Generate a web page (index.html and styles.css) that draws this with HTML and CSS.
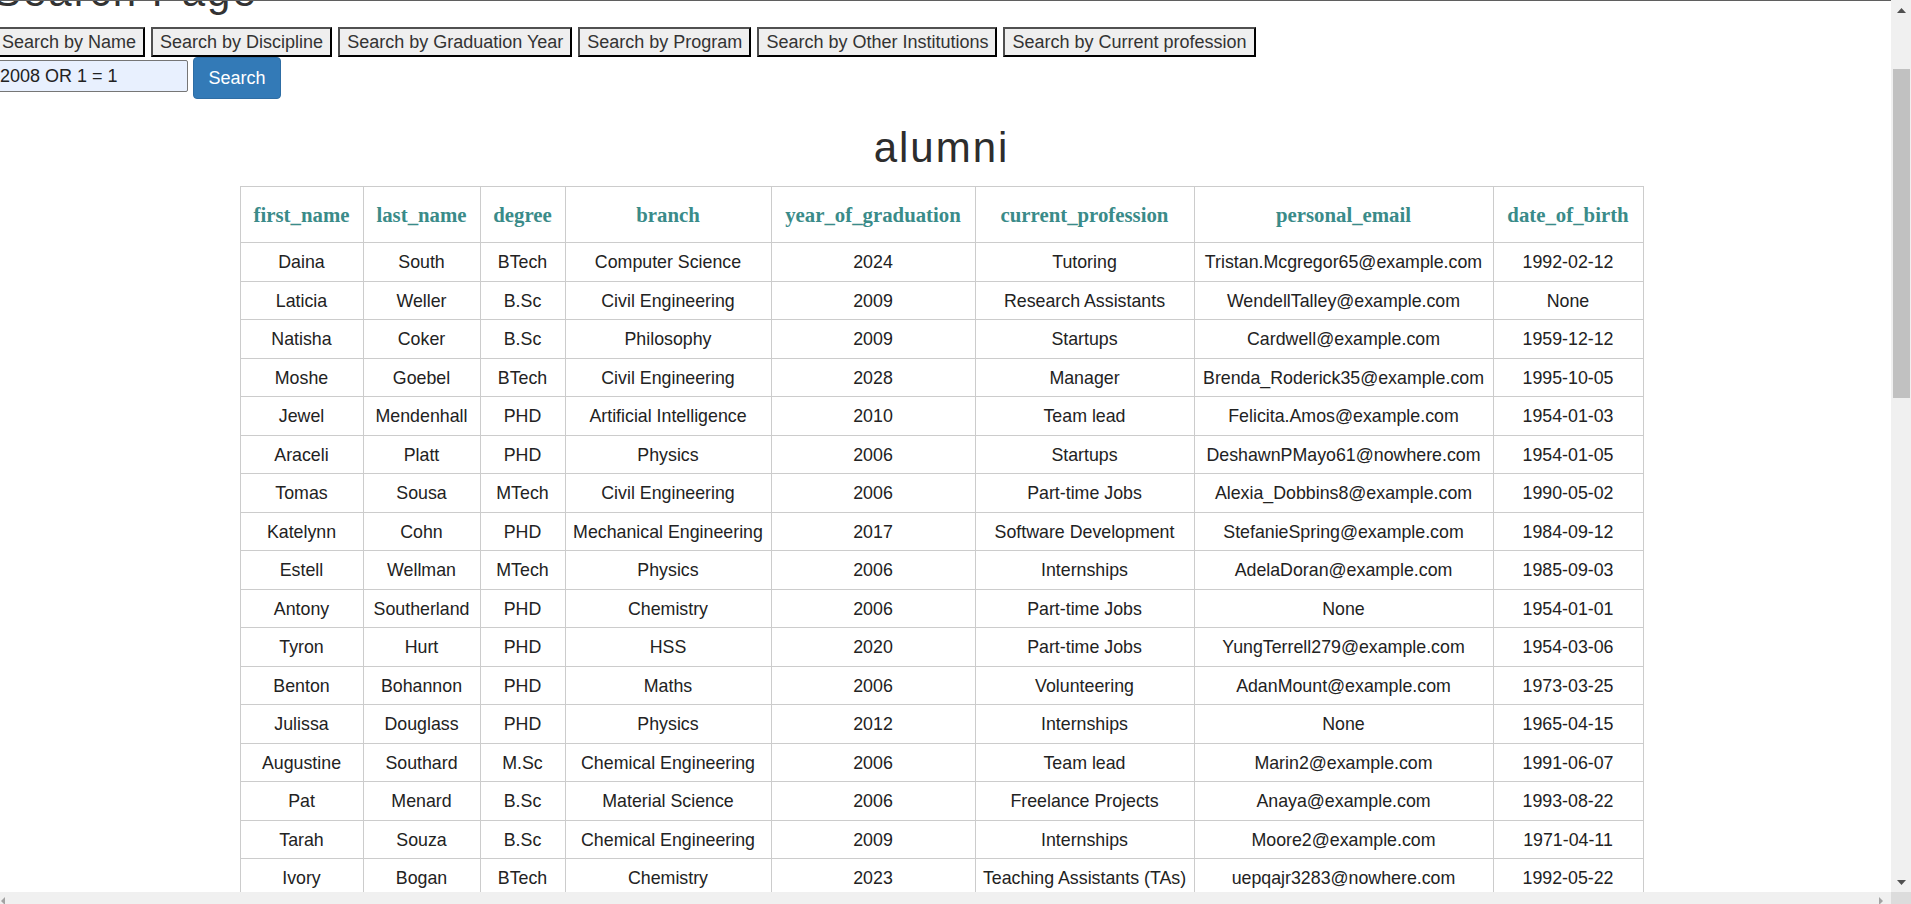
FILE: index.html
```html
<!DOCTYPE html>
<html lang="en">
<head>
<meta charset="utf-8">
<title>Search Page</title>
<link rel="stylesheet" href="styles.css">
</head>
<body>
<div class="window">
  <div class="viewport">
    <div class="page">
      <h1 class="page-title">Search Page</h1>
      <div class="filters">
        <button class="filter-btn" type="button">Search by Name</button>
        <button class="filter-btn" type="button">Search by Discipline</button>
        <button class="filter-btn" type="button">Search by Graduation Year</button>
        <button class="filter-btn" type="button">Search by Program</button>
        <button class="filter-btn" type="button">Search by Other Institutions</button>
        <button class="filter-btn" type="button">Search by Current profession</button>
      </div>
      <form class="search-form">
        <input class="search-input" type="text" value="2008 OR 1 = 1">
        <button class="search-btn" type="button">Search</button>
      </form>
      <h2 class="table-title">alumni</h2>
      <table class="alumni-table">
        <colgroup>
          <col class="c1"><col class="c2"><col class="c3"><col class="c4"><col class="c5"><col class="c6"><col class="c7"><col class="c8">
        </colgroup>
        <thead>
          <tr><th>first_name</th><th>last_name</th><th>degree</th><th>branch</th><th>year_of_graduation</th><th>current_profession</th><th>personal_email</th><th>date_of_birth</th></tr>
        </thead>
        <tbody>
          <tr><td>Daina</td><td>South</td><td>BTech</td><td>Computer Science</td><td>2024</td><td>Tutoring</td><td>Tristan.Mcgregor65@example.com</td><td>1992-02-12</td></tr>
          <tr><td>Laticia</td><td>Weller</td><td>B.Sc</td><td>Civil Engineering</td><td>2009</td><td>Research Assistants</td><td>WendellTalley@example.com</td><td>None</td></tr>
          <tr><td>Natisha</td><td>Coker</td><td>B.Sc</td><td>Philosophy</td><td>2009</td><td>Startups</td><td>Cardwell@example.com</td><td>1959-12-12</td></tr>
          <tr><td>Moshe</td><td>Goebel</td><td>BTech</td><td>Civil Engineering</td><td>2028</td><td>Manager</td><td>Brenda_Roderick35@example.com</td><td>1995-10-05</td></tr>
          <tr><td>Jewel</td><td>Mendenhall</td><td>PHD</td><td>Artificial Intelligence</td><td>2010</td><td>Team lead</td><td>Felicita.Amos@example.com</td><td>1954-01-03</td></tr>
          <tr><td>Araceli</td><td>Platt</td><td>PHD</td><td>Physics</td><td>2006</td><td>Startups</td><td>DeshawnPMayo61@nowhere.com</td><td>1954-01-05</td></tr>
          <tr><td>Tomas</td><td>Sousa</td><td>MTech</td><td>Civil Engineering</td><td>2006</td><td>Part-time Jobs</td><td>Alexia_Dobbins8@example.com</td><td>1990-05-02</td></tr>
          <tr><td>Katelynn</td><td>Cohn</td><td>PHD</td><td>Mechanical Engineering</td><td>2017</td><td>Software Development</td><td>StefanieSpring@example.com</td><td>1984-09-12</td></tr>
          <tr><td>Estell</td><td>Wellman</td><td>MTech</td><td>Physics</td><td>2006</td><td>Internships</td><td>AdelaDoran@example.com</td><td>1985-09-03</td></tr>
          <tr><td>Antony</td><td>Southerland</td><td>PHD</td><td>Chemistry</td><td>2006</td><td>Part-time Jobs</td><td>None</td><td>1954-01-01</td></tr>
          <tr><td>Tyron</td><td>Hurt</td><td>PHD</td><td>HSS</td><td>2020</td><td>Part-time Jobs</td><td>YungTerrell279@example.com</td><td>1954-03-06</td></tr>
          <tr><td>Benton</td><td>Bohannon</td><td>PHD</td><td>Maths</td><td>2006</td><td>Volunteering</td><td>AdanMount@example.com</td><td>1973-03-25</td></tr>
          <tr><td>Julissa</td><td>Douglass</td><td>PHD</td><td>Physics</td><td>2012</td><td>Internships</td><td>None</td><td>1965-04-15</td></tr>
          <tr><td>Augustine</td><td>Southard</td><td>M.Sc</td><td>Chemical Engineering</td><td>2006</td><td>Team lead</td><td>Marin2@example.com</td><td>1991-06-07</td></tr>
          <tr><td>Pat</td><td>Menard</td><td>B.Sc</td><td>Material Science</td><td>2006</td><td>Freelance Projects</td><td>Anaya@example.com</td><td>1993-08-22</td></tr>
          <tr><td>Tarah</td><td>Souza</td><td>B.Sc</td><td>Chemical Engineering</td><td>2009</td><td>Internships</td><td>Moore2@example.com</td><td>1971-04-11</td></tr>
          <tr><td>Ivory</td><td>Bogan</td><td>BTech</td><td>Chemistry</td><td>2023</td><td>Teaching Assistants (TAs)</td><td>uepqajr3283@nowhere.com</td><td>1992-05-22</td></tr>
        </tbody>
      </table>
    </div>
  </div>
  <div class="vscroll">
    <div class="vs-btn">
      <svg width="9" height="5" viewBox="0 0 9 5"><polygon points="0,5 4.5,0 9,5" fill="#505050"/></svg>
    </div>
    <div class="vs-thumb"></div>
    <div class="vs-track"></div>
    <div class="vs-btn">
      <svg width="9" height="5" viewBox="0 0 9 5"><polygon points="0,0 9,0 4.5,5" fill="#505050"/></svg>
    </div>
  </div>
  <div class="hscroll">
    <svg width="1891" height="12" viewBox="0 0 1891 12">
      <polygon points="1,9 5,5 5,13" fill="#a3a3a3"/>
      <polygon points="1879,5 1883,9 1879,13" fill="#a3a3a3"/>
    </svg>
  </div>
  <div class="corner"></div>
</div>
</body>
</html>
```
FILE: styles.css
```css
html, body {
  margin: 0;
  padding: 0;
  overflow: hidden;
  background: #fff;
}

body {
  font-family: "Liberation Sans", Arial, sans-serif;
  color: #222;
}

.window {
  display: grid;
  grid-template-columns: 1891px 20px;
  grid-template-rows: 892px 12px;
  width: 1911px;
  height: 904px;
}

.viewport {
  overflow: hidden;
  border-top: 1px solid #5f5f5f;
  background: #fff;
}

.page {
  margin: -33px 0 0 -7px;
  width: 1897px;
}

.page-title {
  margin: 0 0 11px;
  font-size: 42px;
  line-height: 48px;
  font-weight: 400;
  letter-spacing: 2px;
  color: #333;
  white-space: nowrap;
}

.filters {
  display: flex;
  gap: 6px;
}

.filter-btn {
  margin: 0;
  padding: 1px 7px;
  font: 18px/24px "Liberation Sans", Arial, sans-serif;
  color: #333;
  background: #efefef;
  border: 2px solid;
  border-color: #505050 #000 #000 #505050;
  white-space: nowrap;
}

.search-form {
  display: flex;
  align-items: flex-start;
  gap: 5px;
  margin: 0;
}

.search-input {
  box-sizing: border-box;
  margin: 3px 0 0;
  width: 195px;
  height: 32px;
  padding: 0 6px;
  font: 18px "Liberation Sans", Arial, sans-serif;
  color: #222;
  background: #e8f0fe;
  border: 1px solid #767676;
  border-radius: 2px;
}

.search-btn {
  box-sizing: border-box;
  margin: 0;
  width: 88px;
  height: 42px;
  padding: 0;
  font: 18px "Liberation Sans", Arial, sans-serif;
  color: #fff;
  background: #337ab7;
  border: 1px solid #2e6da4;
  border-radius: 4px;
}

.table-title {
  margin: 25px 0 14px;
  font-size: 42px;
  line-height: 48px;
  font-weight: 400;
  letter-spacing: 2px;
  text-align: center;
  color: #2d2d2d;
}

.alumni-table {
  border-collapse: collapse;
  table-layout: fixed;
  width: 1403px;
  margin: 0 auto;
}

.c1 { width: 123px; }
.c2 { width: 117px; }
.c3 { width: 85px; }
.c4 { width: 206px; }
.c5 { width: 204px; }
.c6 { width: 219px; }
.c7 { width: 299px; }
.c8 { width: 150px; }

.alumni-table th,
.alumni-table td {
  border: 1px solid #cccccc;
  text-align: center;
  padding: 0 4px;
  white-space: nowrap;
}

.alumni-table th {
  height: 55px;
  font: bold 20.8px "Liberation Serif", "Times New Roman", serif;
  color: #3a8b89;
}

.alumni-table td {
  height: 35.5px;
  padding-top: 2px;
  font-size: 17.8px;
  color: #222;
}

.vscroll {
  display: flex;
  flex-direction: column;
  background: #f0f0f0;
}

.vs-btn {
  height: 20px;
  display: flex;
  align-items: center;
  justify-content: center;
}

.vs-thumb {
  margin: 49px 1px 0 2px;
  height: 329px;
  background: #c1c1c1;
}

.vs-track {
  flex: 1;
}

.hscroll {
  background: #f0f0f0;
  overflow: hidden;
}

.hscroll svg {
  display: block;
}

.corner {
  background: #dcdcdc;
}
```
